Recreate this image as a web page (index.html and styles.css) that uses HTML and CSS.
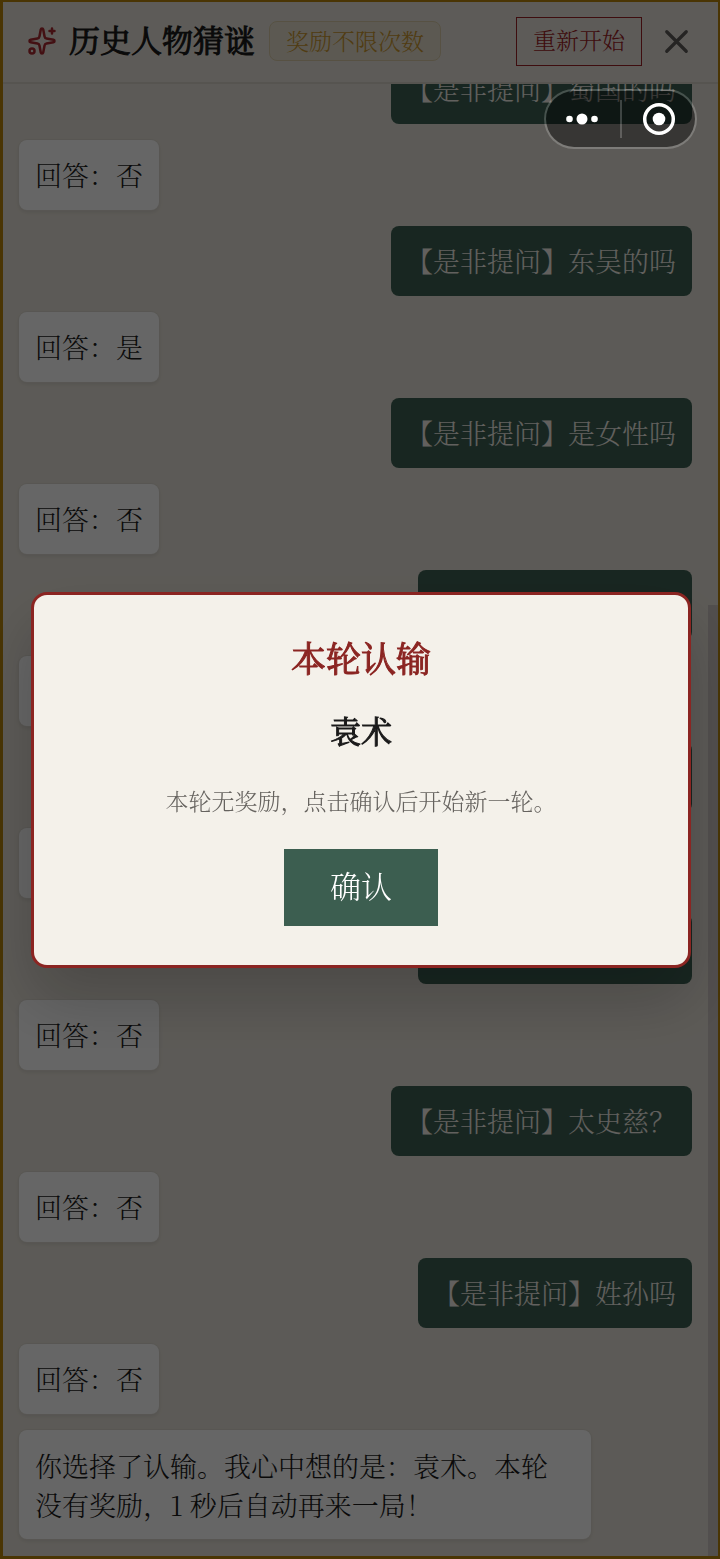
FILE: index.html
```html
<!DOCTYPE html>
<html lang="zh-CN">
<head>
<meta charset="utf-8">
<meta name="viewport" content="width=device-width, initial-scale=1">
<title>历史人物猜谜</title>
<link rel="stylesheet" href="styles.css">
</head>
<body>
<div class="app">
  <header class="header">
    <svg class="logo" viewBox="0 0 24 24" aria-hidden="true">
      <path d="M11.017 2.814a1 1 0 0 1 1.966 0l1.051 5.558a2 2 0 0 0 1.594 1.594l5.558 1.051a1 1 0 0 1 0 1.966l-5.558 1.051a2 2 0 0 0-1.594 1.594l-1.051 5.558a1 1 0 0 1-1.966 0l-1.051-5.558a2 2 0 0 0-1.594-1.594l-5.558-1.051a1 1 0 0 1 0-1.966l5.558-1.051a2 2 0 0 0 1.594-1.594z"/>
      <path d="M20 2v4M22 4h-4"/>
      <circle cx="4" cy="20" r="2"/>
    </svg>
    <h1 class="title">历史人物猜谜</h1>
    <span class="badge">奖励不限次数</span>
    <button class="restart" type="button">重新开始</button>
    <button class="close" type="button" aria-label="关闭">
      <svg viewBox="0 0 24 24" aria-hidden="true"><path d="M18 6 6 18M6 6l12 12"/></svg>
    </button>
  </header>
  <div class="chat">
    <main class="messages">
      <p class="bubble ask">【是非提问】蜀国的吗</p>
      <p class="bubble reply">回答：否</p>
      <p class="bubble ask">【是非提问】东吴的吗</p>
      <p class="bubble reply">回答：是</p>
      <p class="bubble ask">【是非提问】是女性吗</p>
      <p class="bubble reply">回答：否</p>
      <p class="bubble ask covered"></p>
      <p class="bubble reply covered"></p>
      <p class="bubble ask covered"></p>
      <p class="bubble reply covered"></p>
      <p class="bubble ask covered"></p>
      <p class="bubble reply">回答：否</p>
      <p class="bubble ask">【是非提问】太史慈？</p>
      <p class="bubble reply">回答：否</p>
      <p class="bubble ask">【是非提问】姓孙吗</p>
      <p class="bubble reply">回答：否</p>
      <p class="bubble reply long">你选择了认输。我心中想的是：袁术。本轮<br>没有奖励，1 秒后自动再来一局！</p>
    </main>
    <div class="track"><div class="thumb"></div></div>
  </div>
</div>
<div class="overlay">
  <section class="modal" role="dialog" aria-modal="true" aria-labelledby="result">
    <h2 class="result" id="result">本轮认输</h2>
    <p class="answer">袁术</p>
    <p class="note">本轮无奖励，点击确认后开始新一轮。</p>
    <button class="confirm" type="button">确认</button>
  </section>
</div>
<div class="capsule">
  <button class="capsule-btn" type="button" aria-label="更多">
    <svg width="36" height="36" viewBox="0 0 36 36" aria-hidden="true"><circle cx="4.5" cy="18" r="3.3"/><circle cx="17" cy="18" r="5.5"/><circle cx="29.5" cy="18" r="3.3"/></svg>
  </button>
  <span class="divider"></span>
  <button class="capsule-btn" type="button" aria-label="退出">
    <svg width="36" height="36" viewBox="0 0 36 36" aria-hidden="true"><circle class="ring" cx="19" cy="18" r="14.3"/><circle cx="19" cy="18" r="6.3"/></svg>
  </button>
</div>
</body>
</html>
```

FILE: styles.css
```css
* { box-sizing: border-box; }

body {
  margin: 0;
  font-family: "Noto Serif CJK SC", "Noto Serif SC", "Noto Sans CJK SC", serif;
  font-weight: 300;
  color: #1a1a1a;
}

h1, h2, p { margin: 0; }

button {
  padding: 0;
  border: 0;
  background: none;
  font: inherit;
  color: inherit;
}

.app {
  display: flex;
  flex-direction: column;
  height: 100vh;
  border: solid #b8860b;
  border-width: 2px 2px 3px 3px;
  background: #e7e2d9;
  overflow: hidden;
}

.header {
  flex: none;
  display: flex;
  align-items: center;
  height: 82px;
  padding: 0 22px 2px 24px;
  border-bottom: 2px solid #d6d1c8;
  background: #e9e4dc;
}

.logo {
  width: 30px;
  height: 30px;
  margin-right: 12px;
  fill: none;
  stroke: #a82a30;
  stroke-width: 2;
  stroke-linecap: round;
  stroke-linejoin: round;
}

.title,
.result,
.answer {
  font-weight: 400;
  -webkit-text-stroke: 1px currentColor;
}

.title {
  padding-bottom: 4px;
  font-size: 31px;
  line-height: 40px;
  white-space: nowrap;
}

.badge {
  margin-left: 14px;
  padding: 0 16px;
  border: 1px solid #d9cba8;
  border-radius: 8px;
  background: #e6dfcd;
  color: #c9962f;
  font-size: 23px;
  line-height: 38px;
  white-space: nowrap;
}

.restart {
  margin-left: auto;
  height: 49px;
  padding: 0 16px 4px;
  border: 1px solid #9b2226;
  color: #9b2226;
  font-size: 23px;
  white-space: nowrap;
}

.close {
  display: flex;
  margin-left: 15px;
}

.close svg {
  width: 39px;
  height: 39px;
  fill: none;
  stroke: #5c5a58;
  stroke-width: 2;
  stroke-linecap: round;
}

.chat {
  flex: 1;
  display: flex;
  min-height: 0;
}

.messages {
  flex: 1;
  display: flex;
  flex-direction: column;
  justify-content: flex-end;
  gap: 16px;
  padding: 16px 16px 17px;
  overflow: hidden;
}

.bubble {
  flex: none;
  max-width: 85%;
  min-height: 70px;
  padding: 15px 16px 16px;
  border-radius: 8px;
  font-size: 27px;
  line-height: 39px;
}

.ask {
  align-self: flex-end;
  padding-left: 15px;
  background: #3d6053;
  color: #f4f1ea;
}

.reply {
  align-self: flex-start;
  background: #fff;
  box-shadow: 0 0 0 1px #dcd8d0, 0 2px 4px rgba(0, 0, 0, 0.1);
}

.ask.covered { width: 274px; }
.reply.covered { width: 140px; }
.long {
  width: 85%;
  padding: 16px 16px 15px;
}

.track {
  display: flex;
  flex-direction: column;
  justify-content: flex-end;
  width: 10px;
}

.thumb {
  height: 64.6%;
  background: #cdc5c3;
}

.overlay {
  position: fixed;
  inset: 0;
  display: flex;
  align-items: center;
  padding: 0 29px 0 31px;
  background: rgba(0, 0, 0, 0.6);
}

.modal {
  flex: 1;
  display: flex;
  flex-direction: column;
  align-items: center;
  padding: 36px 24px 39px;
  border: 3px solid #8b2522;
  border-radius: 16px;
  background: #f4f1ea;
  box-shadow: 0 32px 64px rgba(0, 0, 0, 0.2);
  text-align: center;
}

.result {
  margin-bottom: 24px;
  color: #8b2522;
  font-size: 35px;
  line-height: 52px;
}

.answer {
  margin-bottom: 30px;
  font-size: 31px;
  line-height: 46px;
}

.note {
  margin-bottom: 30px;
  color: #66635f;
  font-size: 23px;
  line-height: 36px;
}

.confirm {
  height: 77px;
  padding: 0 46px 5px;
  background: #3c5e50;
  color: #fff;
  font-size: 31px;
}

.capsule {
  position: fixed;
  top: 89px;
  right: 23px;
  display: flex;
  align-items: center;
  width: 153px;
  height: 60px;
  border: 2px solid rgba(255, 255, 255, 0.2);
  border-radius: 30px;
  background: rgba(0, 0, 0, 0.4);
  background-clip: padding-box;
}

.capsule-btn {
  flex: 1;
  display: flex;
  justify-content: center;
}

.capsule-btn svg { fill: #fff; }

.capsule-btn .ring {
  fill: none;
  stroke: #fff;
  stroke-width: 3.5;
}

.divider {
  width: 2px;
  height: 38px;
  background: rgba(255, 255, 255, 0.2);
}
```
